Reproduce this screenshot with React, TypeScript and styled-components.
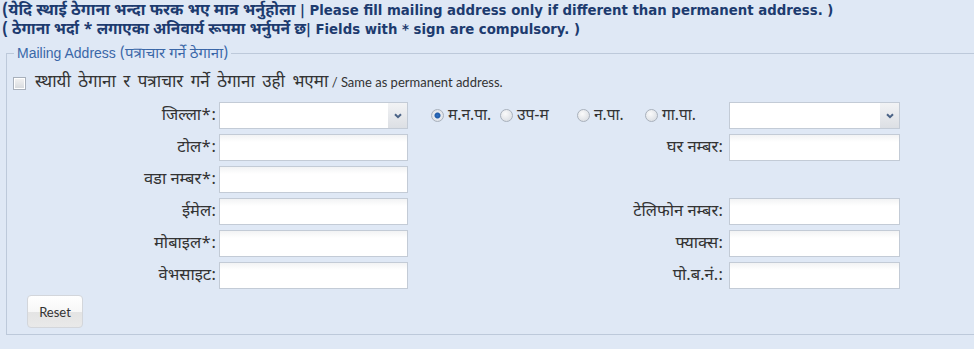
import styled, { createGlobalStyle } from "styled-components"

const deva = `"Noto Sans Devanagari", "Lohit Devanagari", "FreeSerif"`

const Global = createGlobalStyle`
    html, body {
        margin: 0;
        padding: 0;
        background: #dfe8f5;
    }
    body {
        font-family: "Liberation Sans", ${deva}, sans-serif;
    }
`

const Page = styled.div`
    background: #dfe8f5;
    min-height: 349px;
    padding: 1px 0 0 2px;
    box-sizing: border-box;
`

const Notice = styled.div`
    color: #1d3b6f;
    font-family: Tahoma, "DejaVu Sans", ${deva}, sans-serif;
    font-weight: bold;
    font-size: 13.3px;
    line-height: 19px;
`

const Deva = styled.span<{ $size: number; $space?: number }>`
    font-family: ${deva}, sans-serif;
    font-size: ${p => p.$size}px;
    word-spacing: ${p => p.$space ?? 0}px;
    line-height: 1;
`

const Fieldset = styled.fieldset`
    margin: 6px 0 0 4px;
    padding: 0 0 6px 0;
    border: 1px solid #bdc9da;
    border-right: none;
    min-width: 0;
`

const Legend = styled.legend`
    color: #3a67a8;
    font-size: 14px;
    line-height: 16px;
    padding: 0 3px;
    margin-left: 7px;
`

const SameRow = styled.label`
    display: flex;
    align-items: center;
    gap: 9px;
    height: 18px;
    margin: 12px 0 0 6px;
    font-size: 13px;
    color: #333;
    font-family: Lato, "Noto Sans", ${deva}, sans-serif;
`

const Box = styled.span`
    width: 11px;
    height: 11px;
    border: 1px solid #a8b0bb;
    background: linear-gradient(#f4f4f4, #d6d9dd);
    box-shadow: inset 0 0 0 1px #fff;
`

const Grid = styled.div`
    display: grid;
    grid-template-columns: 209px 189px 1fr 171px;
    grid-auto-rows: 27px;
    column-gap: 3px;
    row-gap: 5px;
    margin-top: 10px;
    padding-right: 74px;
`

const Label = styled.div<{ $right?: boolean }>`
    display: flex;
    align-items: center;
    justify-content: flex-end;
    padding-right: ${p => (p.$right ? 3 : 0)}px;
    font-family: ${deva}, "Liberation Sans", sans-serif;
    font-size: 16.5px;
    color: #333;
    white-space: nowrap;
`

const Input = styled.input`
    box-sizing: border-box;
    width: 100%;
    height: 100%;
    margin: 0;
    border: 1px solid #c3cbd6;
    background: linear-gradient(#f2f3f4 0, #fff 7px);
    outline: none;
`

const SelectBox = styled.div`
    display: flex;
    border: 1px solid #c3cbd6;
    background: #fff;
    box-sizing: border-box;
`

const SelectValue = styled.div`
    flex: 1;
`

const Arrow = styled.div`
    width: 19px;
    display: flex;
    align-items: center;
    justify-content: center;
    background: linear-gradient(#f2f3f5, #dcdfe4);
`

const Radios = styled.div`
    display: flex;
    align-items: center;
    padding-left: 20px;
    font-family: ${deva}, sans-serif;
    font-size: 15.5px;
    color: #333;
`

const RadioItem = styled.label<{ $w: number }>`
    display: flex;
    align-items: center;
    gap: 4px;
    width: ${p => p.$w}px;
`

const Dot = styled.span<{ $on?: boolean }>`
    width: 11px;
    height: 11px;
    border-radius: 50%;
    border: 1px solid #a9b1bc;
    background: ${p => p.$on
        ? "radial-gradient(circle, #2d6fc1 0, #1f5ba8 2.5px, #e8ebef 3.5px, #d2d6dc 100%)"
        : "radial-gradient(circle at 40% 35%, #fafafa 0, #d4d8de 100%)"};
`

const ResetButton = styled.button`
    margin: 6px 0 0 20px;
    width: 56px;
    height: 33px;
    border: 1px solid #d3d6db;
    border-radius: 4px;
    background: linear-gradient(#ffffff 0, #f7f7f7 50%, #e4e4e4 51%, #e9e9e9 100%);
    color: #333;
    font-family: Lato, "Noto Sans", sans-serif;
    font-size: 13px;
    padding: 0;
`

const Chevron = () => (
    <svg width="8" height="6" viewBox="0 0 8 6">
        <path d="M1 1.2 L4 4.2 L7 1.2" fill="none" stroke="#4b6386" strokeWidth="2" />
    </svg>
)

const Select = () => (
    <SelectBox>
        <SelectValue />
        <Arrow><Chevron /></Arrow>
    </SelectBox>
)

const Empty = styled.div``

const radios = [
    { text: "म.न.पा.", w: 69 },
    { text: "उप-म", w: 77 },
    { text: "न.पा.", w: 68 },
    { text: "गा.पा.", w: 60 },
]

const App = () => (
    <>
        <Global />
        <Page>
            <Notice>
                <div><Deva $size={16}>(येदि स्थाई ठेगाना भन्दा फरक भए मात्र भर्नुहोला</Deva> | Please fill mailing address only if different than permanent address. )</div>
                <div><Deva $size={15.5}>( ठेगाना भर्दा * लगाएका अनिवार्य रूपमा भर्नुपर्ने छ</Deva>| Fields with * sign are compulsory. )</div>
            </Notice>
            <Fieldset>
                <Legend>Mailing Address <Deva $size={15}>(पत्राचार गर्ने ठेगाना)</Deva></Legend>
                <SameRow>
                    <Box />
                    <span><Deva $size={17} $space={3}>स्थायी ठेगाना र पत्राचार गर्ने ठेगाना उही भएमा</Deva> / Same as permanent address.</span>
                </SameRow>
                <Grid>
                    <Label>जिल्ला*:</Label>
                    <Select />
                    <Radios>
                        {radios.map((r, i) => (
                            <RadioItem key={r.text} $w={r.w}>
                                <Dot $on={i === 0} />
                                {r.text}
                            </RadioItem>
                        ))}
                    </Radios>
                    <Select />

                    <Label>टोल*:</Label>
                    <Input type="text" />
                    <Label $right>घर नम्बर:</Label>
                    <Input type="text" />

                    <Label>वडा नम्बर*:</Label>
                    <Input type="text" />
                    <Empty />
                    <Empty />

                    <Label>ईमेल:</Label>
                    <Input type="text" />
                    <Label $right>टेलिफोन नम्बर:</Label>
                    <Input type="text" />

                    <Label>मोबाइल*:</Label>
                    <Input type="text" />
                    <Label $right>फ्याक्स:</Label>
                    <Input type="text" />

                    <Label>वेभसाइट:</Label>
                    <Input type="text" />
                    <Label $right>पो.ब.नं.:</Label>
                    <Input type="text" />
                </Grid>
                <ResetButton>Reset</ResetButton>
            </Fieldset>
        </Page>
    </>
)

export default App
